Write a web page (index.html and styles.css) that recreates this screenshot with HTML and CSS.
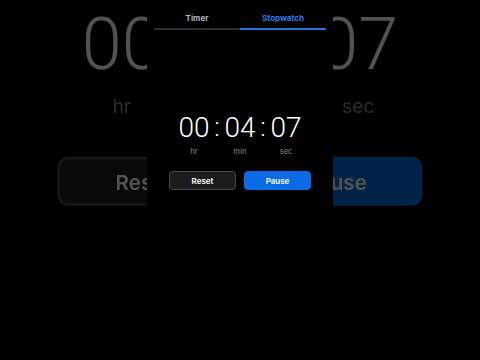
FILE: index.html
```html
<!DOCTYPE html>
<html>
<head>
<meta charset="utf-8">
<link rel="stylesheet" href="styles.css">
</head>
<body>
<div class="stage">
  <div class="backdrop" aria-hidden="true">
    <div class="panel panel-ghost">
      <div class="tabs">
        <div class="tab">Timer</div>
        <div class="tab tab-active">Stopwatch</div>
      </div>
      <div class="clock">
        <div class="unit"><span class="num">00</span><span class="lbl">hr</span></div>
        <span class="colon">:</span>
        <div class="unit"><span class="num">04</span><span class="lbl">min</span></div>
        <span class="colon">:</span>
        <div class="unit"><span class="num">07</span><span class="lbl">sec</span></div>
      </div>
      <div class="actions">
        <button class="btn btn-reset">Reset</button>
        <button class="btn btn-pause">Pause</button>
      </div>
    </div>
  </div>
  <div class="panel">
    <div class="tabs">
      <div class="tab">Timer</div>
      <div class="tab tab-active">Stopwatch</div>
    </div>
    <div class="clock">
      <div class="unit"><span class="num">00</span><span class="lbl">hr</span></div>
      <span class="colon">:</span>
      <div class="unit"><span class="num">04</span><span class="lbl">min</span></div>
      <span class="colon">:</span>
      <div class="unit"><span class="num">07</span><span class="lbl">sec</span></div>
    </div>
    <div class="actions">
      <button class="btn btn-reset">Reset</button>
      <button class="btn btn-pause">Pause</button>
    </div>
  </div>
</div>
</body>
</html>
```
FILE: styles.css
```css
html, body {
  margin: 0;
  padding: 0;
  background: #000;
}
body {
  width: 480px;
  height: 360px;
  overflow: hidden;
  font-family: "Inter", "Liberation Sans", sans-serif;
}
.stage {
  position: relative;
  width: 480px;
  height: 360px;
  display: flex;
  justify-content: center;
  overflow: hidden;
}
.backdrop {
  position: absolute;
  inset: 0;
  display: flex;
  justify-content: center;
  opacity: 0.32;
  filter: blur(0.7px);
}
.panel {
  position: relative;
  width: 186px;
  height: 360px;
  background: #000;
  display: flex;
  flex-direction: column;
  align-items: center;
}
.panel-ghost {
  background: transparent;
  transform: scale(2.57);
  transform-origin: 93px 180px;
}
.tabs {
  width: 172px;
  display: flex;
  margin-top: 13px;
}
.tab {
  flex: 1;
  text-align: center;
  font-size: 8px;
  font-weight: 700;
  color: #b5b5b5;
  padding-bottom: 5px;
  border-bottom: 2px solid #2c2c2e;
  line-height: 10px;
}
.tab-active {
  color: #2f7be8;
  border-bottom-color: #2a6ee0;
}
.clock {
  display: grid;
  grid-template-columns: 34px 12px 34px 12px 34px;
  margin-top: 84px;
}
.unit {
  display: flex;
  flex-direction: column;
  align-items: center;
}
.num {
  font-family: "Roboto", "Liberation Sans", sans-serif;
  font-weight: 300;
  font-size: 28px;
  line-height: 28px;
  color: #fff;
}
.colon {
  font-family: "Roboto", "Liberation Sans", sans-serif;
  font-weight: 300;
  font-size: 26px;
  line-height: 26px;
  color: #fff;
  text-align: center;
}
.lbl {
  font-size: 7.5px;
  color: #8a8a8e;
  margin-top: 5px;
  line-height: 9px;
}
.actions {
  display: flex;
  gap: 8px;
  margin-top: 15px;
}
.btn {
  width: 67px;
  height: 19px;
  border-radius: 4px;
  font-family: "Inter", "Liberation Sans", sans-serif;
  font-size: 8px;
  font-weight: 600;
  color: #fff;
  padding: 0;
  cursor: pointer;
}
.btn-reset {
  background: #1c1c1e;
  border: 1px solid #48484a;
}
.btn-pause {
  background: #0b6be6;
  border: 1px solid #0b6be6;
}
```
